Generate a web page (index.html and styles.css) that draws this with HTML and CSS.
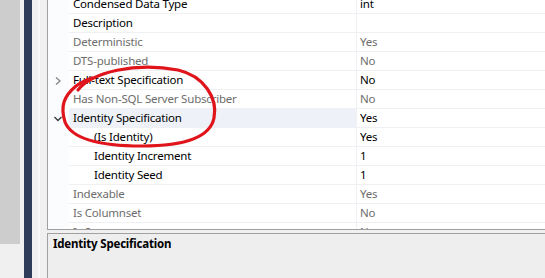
FILE: index.html
```html
<!DOCTYPE html>
<html lang="en">
<head>
    <meta charset="UTF-8">
    <title>Column Properties</title>
    <link rel="stylesheet" href="styles.css">
</head>
<body>
    <div class="scroll-strip"><div class="scroll-thumb"></div></div>
    <div class="nav-bar"></div>
    <div class="frame-gap"></div>

    <div class="props">
        <div class="grid">
            <div class="rows">
                <div class="row"><div class="gutter"></div><div class="name">Condensed Data Type</div><div class="value">int</div></div>
                <div class="row"><div class="gutter"></div><div class="name">Description</div><div class="value"></div></div>
                <div class="row muted"><div class="gutter"></div><div class="name">Deterministic</div><div class="value">Yes</div></div>
                <div class="row muted"><div class="gutter"></div><div class="name">DTS-published</div><div class="value">No</div></div>
                <div class="row">
                    <div class="gutter">
                        <svg width="8" height="10" viewBox="0 0 8 10"><path d="M2 1.5l4 3.5-4 3.5" fill="none" stroke="#8a8a8a" stroke-width="1.4"/></svg>
                    </div>
                    <div class="name">Full-text Specification</div><div class="value">No</div>
                </div>
                <div class="row muted"><div class="gutter"></div><div class="name">Has Non-SQL Server Subscriber</div><div class="value">No</div></div>
                <div class="row selected">
                    <div class="gutter">
                        <svg width="10" height="8" viewBox="0 0 10 8"><path d="M1.5 2l3.5 3.5 3.5-3.5" fill="none" stroke="#3a3a3a" stroke-width="1.4"/></svg>
                    </div>
                    <div class="name">Identity Specification</div><div class="value">Yes</div>
                </div>
                <div class="row child"><div class="gutter"></div><div class="name">(Is Identity)</div><div class="value">Yes</div></div>
                <div class="row child"><div class="gutter"></div><div class="name">Identity Increment</div><div class="value">1</div></div>
                <div class="row child"><div class="gutter"></div><div class="name">Identity Seed</div><div class="value">1</div></div>
                <div class="row muted"><div class="gutter"></div><div class="name">Indexable</div><div class="value">Yes</div></div>
                <div class="row muted"><div class="gutter"></div><div class="name">Is Columnset</div><div class="value">No</div></div>
                <div class="row muted"><div class="gutter"></div><div class="name">Is Sparse</div><div class="value">No</div></div>
            </div>
        </div>

        <div class="description">
            <div class="description-title">Identity Specification</div>
        </div>
    </div>

    <!-- hand-drawn annotation over the grid -->
    <svg class="annotation" width="545" height="278" viewBox="0 0 545 278">
        <path d="M78 90 C 92 72, 135 62, 178 70 C 204 76, 218 98, 214 118 C 210 138, 182 146, 142 146 C 102 146, 72 140, 65 122 C 60 106, 64 96, 76 86 C 80 83, 86 80, 92 78"
              fill="none" stroke="#e0141b" stroke-width="3.2" stroke-linecap="round"/>
    </svg>
</body>
</html>
```

FILE: styles.css
```css
:root {
    --panel-bg: #f0f0f0;
    --border-dark: #a0a0a0;
    --row-line: #eef0f4;
    --text: #000000;
    --text-muted: #6d6d6d;
    --selected: #eef2f8;
}

* {
    margin: 0;
    padding: 0;
    box-sizing: border-box;
}

body {
    width: 545px;
    height: 278px;
    display: flex;
    overflow: hidden;
    position: relative;
    background: var(--panel-bg);
    font-family: "Noto Sans", "Open Sans", sans-serif;
    font-size: 11.5px;
    letter-spacing: -0.2px;
    color: var(--text);
}

.scroll-strip {
    width: 24px;
    padding-right: 4px;
    background: var(--panel-bg);
}

.scroll-thumb {
    height: 244px;
    background: #cdcdcd;
}

.nav-bar {
    width: 8px;
    background: #2e3c59;
}

.frame-gap {
    width: 15px;
    background: linear-gradient(to right, #f0f0f0 6px, #f8f8f8 6px, #f8f8f8 8px, #f0f0f0 8px);
}

.props {
    flex: 1;
    display: flex;
    flex-direction: column;
    gap: 3px;
}

.grid {
    height: 230px;
    overflow: hidden;
    background: #ffffff;
    border-left: 1px solid var(--border-dark);
    border-bottom: 1px solid var(--border-dark);
}

.rows {
    margin-top: -5px;
}

.row {
    display: flex;
    height: 19px;
}

.gutter {
    width: 21px;
    flex-shrink: 0;
    display: flex;
    align-items: center;
    justify-content: center;
    background: #fbfcfd;
    padding-right: 1px;
}

.name {
    width: 288px;
    flex-shrink: 0;
    padding-left: 4px;
    line-height: 18px;
    border-bottom: 1px solid var(--row-line);
    border-right: 1px solid var(--row-line);
    white-space: nowrap;
}

.value {
    flex: 1;
    padding-left: 3px;
    line-height: 18px;
    border-bottom: 1px solid var(--row-line);
}

.row.muted .name,
.row.muted .value {
    color: var(--text-muted);
}

.row.child .name {
    padding-left: 25px;
}

.row.selected .name {
    background: var(--selected);
}

.description {
    flex: 1;
    background: #eeeeee;
    border-left: 1px solid var(--border-dark);
    border-top: 1px solid var(--border-dark);
    padding: 2px 5px;
}

.description-title {
    font-weight: 700;
    line-height: 16px;
}

.annotation {
    position: absolute;
    left: 0;
    top: 0;
    pointer-events: none;
}
```
